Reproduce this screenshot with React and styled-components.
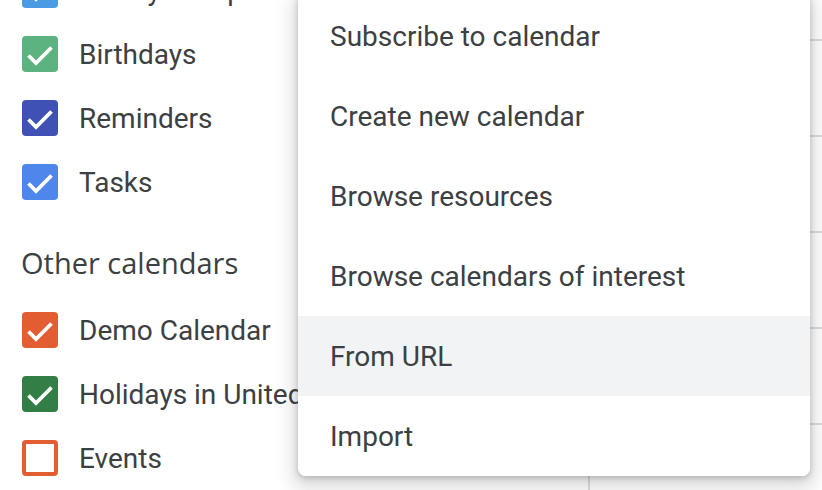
import React from "react";
import styled, { createGlobalStyle } from "styled-components";

const Global = createGlobalStyle`
  html, body { margin: 0; padding: 0; background: #fff; }
  body { width: 822px; height: 490px; overflow: hidden; font-family: Roboto, "Noto Sans", Arial, sans-serif; }
`;

const Page = styled.div`
  position: relative;
  width: 822px;
  height: 490px;
  overflow: hidden;
  display: flex;
  background: #fff;
`;

const Sidebar = styled.div`
  width: 520px;
  flex-shrink: 0;
  display: flex;
  flex-direction: column;
  margin-top: -42px;
  padding-left: 22px;
  box-sizing: border-box;
`;

const Row = styled.div`
  height: 64px;
  display: flex;
  align-items: center;
  gap: 21px;
  flex-shrink: 0;
`;

const Box = styled.div`
  width: 36px;
  height: 36px;
  border-radius: 4px;
  box-sizing: border-box;
  flex-shrink: 0;
  display: flex;
  align-items: center;
  justify-content: center;
  background: ${(p) => (p.$checked ? p.$color : "transparent")};
  border: ${(p) => (p.$checked ? "none" : `4px solid ${p.$color}`)};
`;

const Label = styled.span`
  font-family: Roboto, Arial, sans-serif;
  font-size: 28px;
  color: #3c4043;
  white-space: nowrap;
`;

const Heading = styled.div`
  height: 87px;
  box-sizing: border-box;
  padding-top: 32px;
  font-family: "Open Sans", Roboto, sans-serif;
  font-weight: 500;
  font-size: 29px;
  line-height: 34px;
  color: #3c4043;
  white-space: nowrap;
  margin-left: -1px;
`;

const Main = styled.div`
  flex: 1;
  display: flex;
`;

const Gutter = styled.div`
  width: 68px;
  flex-shrink: 0;
`;

const Days = styled.div`
  flex: 1;
  border-left: 2px solid #dadce0;
  display: flex;
  flex-direction: column;
  margin-top: -55px;
`;

const HourRow = styled.div`
  height: 94px;
  border-bottom: 2px solid #dadce0;
  flex-shrink: 0;
`;

const Menu = styled.div`
  position: absolute;
  left: 298px;
  top: -4px;
  width: 512px;
  background: #fff;
  border-radius: 0 0 8px 8px;
  box-shadow: 0 8px 18px 6px rgba(60, 64, 67, 0.16), 0 2px 6px rgba(60, 64, 67, 0.3);
  display: flex;
  flex-direction: column;
  overflow: hidden;
`;

const MenuItem = styled.div`
  height: 80px;
  display: flex;
  align-items: center;
  padding-left: 32px;
  font-family: Roboto, Arial, sans-serif;
  font-size: 28px;
  color: #3c4043;
  background: ${(p) => (p.$active ? "#f1f3f4" : "#fff")};
`;

const Check = () => (
  <svg width="36" height="36" viewBox="0 0 36 36">
    <polyline
      points="6.5,19.5 14,27 29.5,11.5"
      fill="none"
      stroke="#fff"
      strokeWidth="3.8"
    />
  </svg>
);

const myCalendars = [
  { name: "Family Groups", color: "#4a9be3", checked: true },
  { name: "Birthdays", color: "#5cb37f", checked: true },
  { name: "Reminders", color: "#3f51b5", checked: true },
  { name: "Tasks", color: "#4f86ec", checked: true },
];

const otherCalendars = [
  { name: "Demo Calendar", color: "#e35d33", checked: true },
  { name: "Holidays in United States", color: "#337e47", checked: true },
  { name: "Events", color: "#e35d33", checked: false },
];

const menuItems = [
  "Subscribe to calendar",
  "Create new calendar",
  "Browse resources",
  "Browse calendars of interest",
  "From URL",
  "Import",
];

function CalRow({ cal }) {
  return (
    <Row>
      <Box $color={cal.color} $checked={cal.checked}>
        {cal.checked && <Check />}
      </Box>
      <Label>{cal.name}</Label>
    </Row>
  );
}

export default function App() {
  return (
    <>
      <Global />
      <Page>
        <Sidebar>
          {myCalendars.map((c) => (
            <CalRow key={c.name} cal={c} />
          ))}
          <Heading>Other calendars</Heading>
          {otherCalendars.map((c) => (
            <CalRow key={c.name} cal={c} />
          ))}
        </Sidebar>
        <Main>
          <Gutter />
          <Days>
            {Array.from({ length: 7 }).map((_, i) => (
              <HourRow key={i} />
            ))}
          </Days>
        </Main>
        <Menu>
          {menuItems.map((m) => (
            <MenuItem key={m} $active={m === "From URL"}>
              {m}
            </MenuItem>
          ))}
        </Menu>
      </Page>
    </>
  );
}
